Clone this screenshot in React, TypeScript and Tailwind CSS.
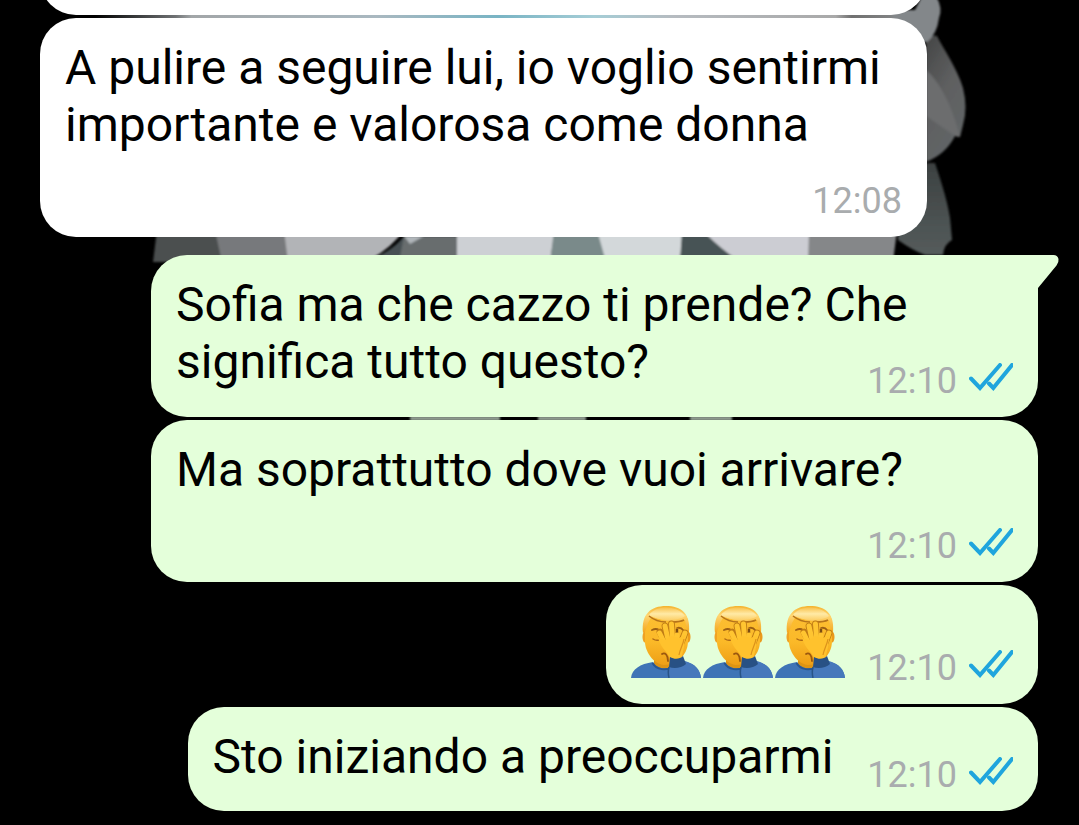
import type { ReactNode } from 'react';
import clsx from 'clsx';

type Message = {
  id: number;
  time: string;
  text?: string;
  facepalms?: number;
  outgoing: boolean;
  compact?: boolean;
  tail?: boolean;
};

const MESSAGES: Message[] = [
  {
    id: 1,
    time: '12:08',
    text: 'A pulire a seguire lui, io voglio sentirmi importante e valorosa come donna',
    outgoing: false,
  },
  {
    id: 2,
    time: '12:10',
    text: 'Sofia ma che cazzo ti prende? Che significa tutto questo?',
    outgoing: true,
    tail: true,
  },
  { id: 3, time: '12:10', text: 'Ma soprattutto dove vuoi arrivare?', outgoing: true },
  { id: 4, time: '12:10', facepalms: 3, outgoing: true, compact: true },
  { id: 5, time: '12:10', text: 'Sto iniziando a preoccuparmi', outgoing: true, compact: true },
];

function ReadTicks() {
  return (
    <svg className="h-9 w-11" viewBox="0 0 44 36" fill="none" stroke="#1fa5dd" strokeWidth="4" role="img" aria-label="Letto">
      <path d="M2 15.500 11 25 31 2" strokeLinecap="round" />
      <path d="M20 20.500 24.300 25 43 2" strokeLinecap="round" />
    </svg>
  );
}

function Tail() {
  return (
    <svg className="absolute top-0 -right-[21px] h-[34px] w-[22px]" viewBox="0 0 22 34" fill="#e4ffda" aria-hidden="true">
      <path d="M0 0H16.5Q20.5 0 21.5 4Q22 7.500 19.500 10.500L1 33H0Z" />
    </svg>
  );
}

function Facepalm() {
  return (
    <svg className="size-[72px]" viewBox="0 0 72 72" role="img" aria-label="Facepalm">
      <defs>
        <linearGradient id="skin" x1="0" y1="0" x2="0" y2="1">
          <stop offset="0" stopColor="#fcbf35" />
          <stop offset="0.6" stopColor="#fbb928" />
          <stop offset="1" stopColor="#ee9f16" />
        </linearGradient>
        <linearGradient id="hair" x1="0" y1="0" x2="0" y2="1">
          <stop offset="0" stopColor="#f5b32e" />
          <stop offset="0.35" stopColor="#ffd672" />
          <stop offset="1" stopColor="#f3a51d" />
        </linearGradient>
        <linearGradient id="shine" x1="0" y1="0" x2="0" y2="1">
          <stop offset="0" stopColor="#f9c350" />
          <stop offset="0.5" stopColor="#ffeaa6" />
          <stop offset="1" stopColor="#fcd06a" />
        </linearGradient>
      </defs>
      <path d="M23 48h18v16H23z" fill="#dd9414" />
      <path d="M0 72c1-9 9-14 22-16 4 7 15 9 20 3l13-3c9 2 14 7 15 16z" fill="#3f74b6" />
      <path d="M21.500 57c4 7 14 8 20 4" fill="none" stroke="#2a5790" strokeWidth="2" />
      <ellipse cx="14" cy="31" rx="2.500" ry="5.500" fill="#f0a223" />
      <ellipse cx="57" cy="31" rx="2.500" ry="5.500" fill="#eb9a1c" />
      <path d="M14 17C15 6 24 2 36 2s21 4 21 15v18c0 12-9 24-24 24C22 58 14 45 14 36z" fill="url(#skin)" />
      <path d="M12 27C10 8 20 0 35 0s25 7 23 27l-2-2-2-11c-8 3-22 2-33-4l-4 7-3 9z" fill="url(#hair)" />
      <path d="M18 9C25-1 46-1 54 10c-6 5-26 6-36-1z" fill="url(#shine)" />
      <path d="M18 10c5 4 11 6 17 6M41 16q8 0 12-2" fill="none" stroke="#b5731b" strokeWidth="1.600" />
      <path d="M21 24q4-2 7 0M46 22q4-1 6 2" fill="none" stroke="#9b5f14" strokeWidth="1.800" strokeLinecap="round" />
      <path d="M22 33q3 2 6 1" fill="none" stroke="#ad6a16" strokeWidth="1.500" strokeLinecap="round" />
      <path d="M46 23v5" stroke="#7c4c12" strokeWidth="2.400" />
      <g stroke="#bf7c16" strokeWidth="6.800" strokeLinecap="round" fill="none">
        <path d="M29 26 36 40" />
        <path d="M34 20 38 38" />
        <path d="M40.500 18 42 38" />
        <path d="M54 27 48 42" />
      </g>
      <g stroke="#ffc531" strokeWidth="5" strokeLinecap="round" fill="none">
        <path d="M28.500 27 36 42" />
        <path d="M34 20 38 38" />
        <path d="M40.500 18 42 38" />
        <path d="M46 29 45 42" />
        <path d="M54 27 48 43" />
      </g>
      <path d="M27 32 34 34 40 30 48 32 54 29 53 41C52 46 51 49 50 53H39C39 48 30 43 27 32z" fill="#ffc22d" />
      <path d="M53 33c-1 6-4 10-5 16" fill="none" stroke="#dc921b" strokeWidth="1.200" />
      <path d="M31 48c3-2 6 1 6 7" fill="none" stroke="#9b580f" strokeWidth="1.800" strokeLinecap="round" />
      <path d="M38 72c-1-7 0-12 3-15l13-2c10 3 15 9 16 17z" fill="#4678bb" />
      <path d="M39 51c5 3 10 2 13-1l3 8c-4 4-12 5-17 3z" fill="#285184" />
      <path d="M38 61c-1 4-1 7 0 11" fill="none" stroke="#285487" strokeWidth="1.500" />
    </svg>
  );
}

// Fiore in bianco e nero che spunta dietro i messaggi
function Wallpaper() {
  return (
    <svg className="absolute top-0 left-0 h-[825px] w-[1079px]" viewBox="0 0 1079 825" aria-hidden="true">
      <defs>
        <linearGradient id="gap">
          <stop offset="0" stopColor="#000" />
          <stop offset="0.1" stopColor="#6f7274" />
          <stop offset="0.12" stopColor="#a2a6a8" />
          <stop offset="0.35" stopColor="#a9b8c0" />
          <stop offset="0.5" stopColor="#79b4c4" />
          <stop offset="0.62" stopColor="#a5cdd6" />
          <stop offset="0.72" stopColor="#b6bbc0" />
          <stop offset="0.92" stopColor="#a9a9a9" />
          <stop offset="0.94" stopColor="#707070" />
          <stop offset="1" stopColor="#858788" />
        </linearGradient>
        <linearGradient id="petal" x1="0" y1="0" x2="0.500" y2="1">
          <stop offset="0" stopColor="#454646" />
          <stop offset="0.550" stopColor="#5f6061" />
          <stop offset="1" stopColor="#626667" />
        </linearGradient>
        <linearGradient id="leaf" x1="0" y1="0" x2="0" y2="1">
          <stop offset="0" stopColor="#3c4141" />
          <stop offset="1" stopColor="#555c5c" />
        </linearGradient>
        <filter id="soft" x="-5%" y="-5%" width="110%" height="110%">
          <feGaussianBlur stdDeviation="1.3" />
        </filter>
      </defs>
      <rect x="95" y="14" width="805" height="5" fill="url(#gap)" />
      <g filter="url(#soft)">
        <path d="M926 40Q932 34 937 36C944 50 957 68 963 88Q968 108 963 125L960 137 955 136Q946 154 926 162Z" fill="url(#petal)" />
        <path d="M890 10H915L922-4H936Q943 8 939 18 937 34 927 42L900 40Z" fill="#83878a" />
        <path d="M926 70C940 82 952 106 960 137L955 136 926 116Z" fill="#6c6d6e" />
        <path d="M926 163H935C942 184 947 200 950 218L952 240Q944 244 943 255H925Q912 250 898 240V228Z" fill="url(#leaf)" />
        <path d="M157 230H222V262H153Z" fill="#4b4f50" />
        <path d="M215 230H290V262H222Z" fill="#77797b" />
        <path d="M284 230H404Q392 248 366 262H288Z" fill="#b2b4b7" />
        <path d="M404 236Q394 250 366 262H402L405 236Z" fill="#465052" />
        <path d="M404 236H458V262H399Z" fill="#686d6e" />
        <path d="M404 236H424L410 244Z" fill="#b0b6ba" />
        <path d="M457 230H555L550 262H457Z" fill="#cdd0d4" />
        <path d="M554 230H600L607 262H550Z" fill="#7a8a8a" />
        <path d="M597 230H683L680 262H606Z" fill="#d3d8da" />
        <path d="M682 230H716L741 262H680Z" fill="#475354" />
        <path d="M704 232H810V262H741Q724 252 704 232Z" fill="#cccdd3" />
        <path d="M809 230H897L893 262H808Z" fill="#858789" />
        <path d="M410 416H500V421H410ZM538 416H586V421H538ZM690 416H732V421H690Z" fill="#8c988c" />
      </g>
    </svg>
  );
}

function Bubble({ message }: { message: Message }) {
  const { outgoing, compact, tail, text, time, facepalms } = message;

  let body: ReactNode = text;
  if (facepalms) {
    body = (
      <span className="flex">
        {Array.from({ length: facepalms }, (_, i) => (
          <Facepalm key={i} />
        ))}
      </span>
    );
  }

  return (
    <li
      className={clsx(
        'relative rounded-[36px] px-[25px] pt-[21px] pb-[15px] text-[48px] leading-[57px] text-black',
        outgoing ? 'self-end bg-[#e4ffda]' : 'self-start bg-white',
        tail && 'mt-[15px] rounded-tr-none',
        compact ? 'flex items-end' : 'flow-root w-full max-w-[887px]',
      )}
    >
      <span className={clsx(compact && 'pb-[11px]')}>{body}</span>
      {/* The float stays on the last line of text when it fits, otherwise it drops below */}
      <span
        className={clsx(
          'flex shrink-0 items-center gap-3 text-[36px] leading-[42px] text-[#a9acae]',
          compact ? (facepalms ? 'pl-5' : 'pl-[34px]') : 'float-right mt-[27px] pl-[34px]',
        )}
      >
        <time>{time}</time>
        {outgoing && <ReadTicks />}
      </span>
      {tail && <Tail />}
    </li>
  );
}

export default function App() {
  return (
    <main className="relative min-h-screen overflow-hidden bg-black font-[Roboto,sans-serif]">
      <Wallpaper />
      <div className="relative flex flex-col gap-[3px] pr-[41px] pl-10">
        {/* Previous bubble, cut off by the top edge */}
        <div className="-mt-[57px] h-[72px] w-full max-w-[887px] rounded-[36px] bg-white" />
        <ul className="flex flex-col gap-[3px]">
          {MESSAGES.map((message) => (
            <Bubble key={message.id} message={message} />
          ))}
        </ul>
      </div>
    </main>
  );
}
